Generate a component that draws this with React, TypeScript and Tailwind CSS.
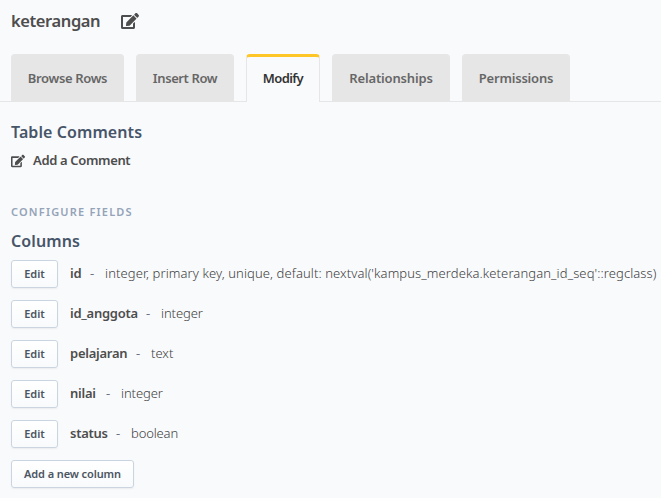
import { FaEdit } from "react-icons/fa";

const tabs = [
  { label: "Browse Rows", width: "w-[113px]", tracking: "tracking-[-0.35px]" },
  { label: "Insert Row", width: "w-[98px]", tracking: "tracking-[-0.4px]" },
  { label: "Modify", width: "w-[74px]", tracking: "tracking-[-0.6px]", active: true },
  { label: "Relationships", width: "w-[118px]", tracking: "tracking-[-0.15px]" },
  { label: "Permissions", width: "w-[108px]", tracking: "tracking-[-0.2px]" },
];

const columns = [
  { name: "id", type: "integer, primary key, unique, default: nextval('kampus_merdeka.keterangan_id_seq'::regclass)", nameWidth: "w-[19px]", typeTracking: "tracking-[0.1px]" },
  { name: "id_anggota", type: "integer", nameWidth: "w-[75px]", typeTracking: "tracking-[-0.1px]" },
  { name: "pelajaran", type: "text", nameWidth: "w-[65px]", typeTracking: "tracking-[0px]" },
  { name: "nilai", type: "integer", nameWidth: "w-[35px]", typeTracking: "tracking-[-0.1px]" },
  { name: "status", type: "boolean", nameWidth: "w-[45px]", typeTracking: "tracking-[-0.15px]" },
];

const button =
  "h-7 shrink-0 rounded-[3px] border border-[#cbd5e1] bg-linear-to-t from-[#f8fafc] to-white text-[11px] font-semibold text-[#4b5563] shadow-[0_1px_2px_rgba(0,0,0,0.06)]";

export default function App() {
  return (
    <main className="h-[498px] w-[661px] overflow-hidden whitespace-nowrap bg-[#f9fafc] font-['Noto_Sans',sans-serif] text-[#4d4d4d]">
      <header className="flex h-[54px] items-start pl-[11px] pt-[9px]">
        <h1 className="w-[110px] text-[16.5px] font-semibold leading-6 tracking-[-0.4px]">keterangan</h1>
        <FaEdit className="mt-[3px] size-[18px]" />
      </header>
      <nav className="flex h-12 gap-3 border-b border-[#e6e6e6] pl-[11px]">
        {tabs.map((t) => (
          <a
            key={t.label}
            className={`flex h-12 items-center justify-center rounded-t-[4px] pt-0.5 text-[13px] font-semibold ${t.width} ${t.tracking} ${
              t.active
                ? "border-x border-t-[3px] border-x-[#e6e6e6] border-t-[#ffc627] bg-[#f9fafc] pb-[3px] text-[#333]"
                : "bg-[#e6e6e6] text-[#666]"
            }`}
          >
            {t.label}
          </a>
        ))}
      </nav>
      <section className="pl-[11px]">
        <h2 className="mt-[18px] text-base font-semibold leading-6 tracking-[0.08px] text-[#475569]">Table Comments</h2>
        <div className="mt-[6px] flex h-5 items-center">
          <FaEdit className="mt-[2px] size-[14px]" />
          <span className="ml-2 mt-0.5 text-[13px] font-semibold tracking-[-0.35px]">Add a Comment</span>
        </div>
        <h3 className="mt-[34px] text-[11px] font-semibold leading-4 tracking-[1.2px] text-[#94a3b8]">CONFIGURE FIELDS</h3>
        <h2 className="mt-[9px] text-base font-semibold leading-6 tracking-[0.12px] text-[#475569]">Columns</h2>
        <div className="mt-[7px] flex flex-col gap-3">
          {columns.map((c) => (
            <div key={c.name} className="flex h-7 items-center text-[13px]">
              <button className={`${button} w-[47px]`}>Edit</button>
              <b className={`ml-3 shrink-0 ${c.nameWidth} font-semibold tracking-[-0.25px]`}>{c.name}</b>
              <span className="w-4 shrink-0 pl-px text-[#6b7280]">-</span>
              <span className={`font-light text-[#404040] ${c.typeTracking}`}>{c.type}</span>
            </div>
          ))}
        </div>
        <button className={`${button} mt-3 w-[123px] tracking-[-0.1px]`}>Add a new column</button>
      </section>
    </main>
  );
}
